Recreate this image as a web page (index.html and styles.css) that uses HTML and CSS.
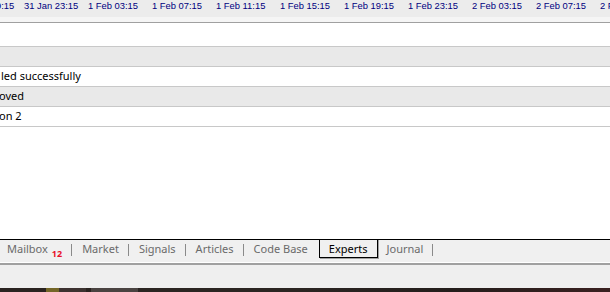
FILE: index.html
```html
<!DOCTYPE html>
<html lang="en">
<head>
  <meta charset="UTF-8">
  <meta name="viewport" content="width=device-width, initial-scale=1.0">
  <title>Toolbox - Experts</title>
  <link rel="stylesheet" href="styles.css">
</head>
<body>
  <div class="timebar">
    <div class="times">
      <span>31 Jan 19:15</span>
      <span>31 Jan 23:15</span>
      <span>1 Feb 03:15</span>
      <span>1 Feb 07:15</span>
      <span>1 Feb 11:15</span>
      <span>1 Feb 15:15</span>
      <span>1 Feb 19:15</span>
      <span>1 Feb 23:15</span>
      <span>2 Feb 03:15</span>
      <span>2 Feb 07:15</span>
      <span>2 Feb 11:15</span>
    </div>
  </div>

  <div class="log">
    <div class="row first"></div>
    <div class="row alt"></div>
    <div class="row"><span class="msg">led successfully</span></div>
    <div class="row alt"><span class="msg cut">oved</span></div>
    <div class="row"><span class="msg cut">on 2</span></div>
  </div>

  <div class="tabs">
    <span class="tab first">Mailbox<span class="badge">12</span></span>
    <span class="sep"></span>
    <span class="tab">Market</span>
    <span class="sep"></span>
    <span class="tab">Signals</span>
    <span class="sep"></span>
    <span class="tab">Articles</span>
    <span class="sep"></span>
    <span class="tab before-active">Code Base</span>
    <span class="tab active">Experts</span>
    <span class="tab after-active">Journal</span>
    <span class="sep"></span>
  </div>

  <div class="status"></div>
  <div class="desktop"></div>
</body>
</html>
```

FILE: styles.css
```css
html, body {
  margin: 0;
  padding: 0;
}
body {
  width: 610px;
  height: 292px;
  overflow: hidden;
  display: flex;
  flex-direction: column;
  background: #fff;
  font-family: "Noto Sans", "Open Sans", sans-serif;
  font-size: 11px;
}

/* time scale on top */
.timebar {
  height: 22px;
  background: linear-gradient(#ececec 0 17px, #f5f5f5 17px);
  border-bottom: 1px solid #a0a0a0;
  overflow: hidden;
  white-space: nowrap;
}
.times {
  display: flex;
  margin-left: -40px;
  font-family: "Liberation Sans", Arial, sans-serif;
  font-size: 9.4px;
  line-height: 12px;
  color: #000080;
}
.times span {
  flex: 0 0 64px;
}

/* journal rows */
.log {
  flex: 1;
  overflow: hidden;
}
.row {
  height: 20px;
  box-sizing: border-box;
  border-bottom: 1px solid #c8c8c8;
  line-height: 17px;
  padding-left: 1px;
  white-space: nowrap;
  color: #000;
}
.row.first {
  height: 24px;
}
.row.alt {
  background: #e9e9e9;
}
.msg.cut {
  margin-left: -2px;
}

/* bottom tabs */
.tabs {
  height: 22px;
  border-top: 1px solid #000;
  border-bottom: 1px solid #fff;
  background: #f0f0f0;
  display: flex;
  align-items: flex-start;
  line-height: 17px;
  color: #6a6a6a;
  white-space: nowrap;
}
.tab {
  padding: 0 9px 0 10px;
}
.tab.first {
  padding-left: 7px;
}
.tab.before-active {
  padding-right: 11px;
}
.tab.after-active {
  padding-left: 9px;
}
.tab.active {
  margin-top: -1px;
  padding: 0 9px 0;
  border: 1px solid #000;
  box-shadow: 1px 1px 0 #a0a0a0;
  color: #000;
  background: #f0f0f0;
}
.badge {
  margin-left: 4px;
  font-size: 9px;
  font-weight: bold;
  color: #e8102a;
  position: relative;
  top: 4px;
}
.sep {
  width: 1px;
  height: 12px;
  margin-top: 4px;
  background: #8a8a8a;
}

.status {
  height: 23px;
  border-top: 2px solid #a0a0a0;
  background: #efefef;
}

.desktop {
  height: 4px;
  background: linear-gradient(90deg,
    #2a2320 0 46px,
    #746628 46px 59px,
    #3c3230 59px 86px,
    #2a2320 86px 91px,
    #4a4341 91px 138px,
    #2b2522 138px 300px,
    #241e1c 450px,
    #3a2020 610px);
}
```
